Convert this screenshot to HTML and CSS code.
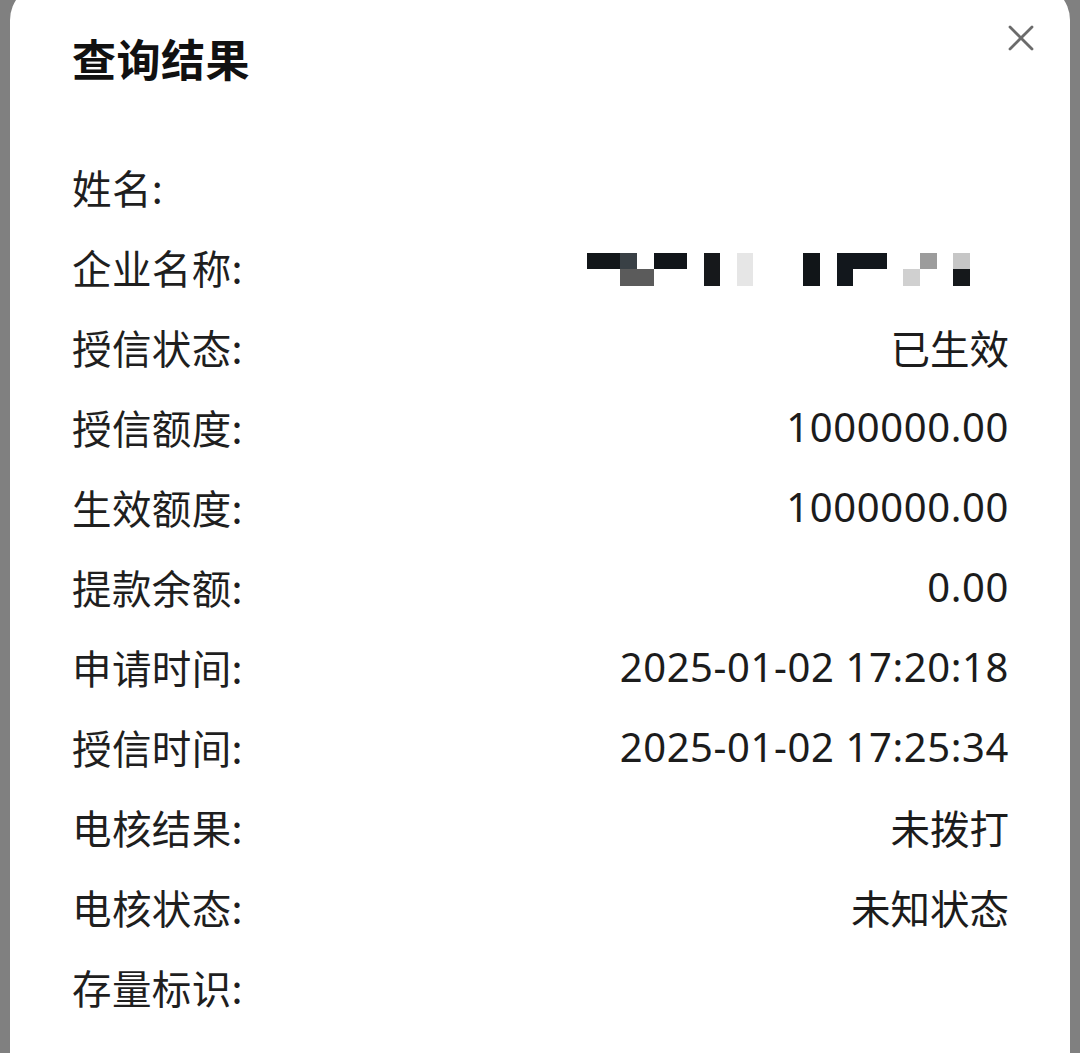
FILE: index.html
```html
<!DOCTYPE html>
<html lang="zh-CN">
<head>
<meta charset="utf-8">
<title>查询结果</title>
<link rel="stylesheet" href="styles.css">
</head>
<body>
<div class="sheet">
  <div class="header">
    <h1 class="title">查询结果</h1>
    <button class="close" aria-label="关闭">
      <svg viewBox="0 0 26 26" width="26" height="26"><path d="M2 2L24 24M24 2L2 24" stroke="#6b6b6b" stroke-width="2.8" stroke-linecap="round"/></svg>
    </button>
  </div>
  <div class="rows">
    <div class="row"><span class="label">姓名:</span><span class="value"></span></div>
    <div class="row"><span class="label">企业名称:</span>
      <span class="mosaic">
        <i class="c a"></i><i class="c b"></i><i class="c d"></i><i class="c e"></i>
        <i class="c f"></i><i class="c g"></i><i class="c h"></i><i class="c j"></i>
        <i class="c k"></i><i class="c l"></i><i class="c m"></i><i class="c n"></i><i class="c o"></i>
      </span>
    </div>
    <div class="row"><span class="label">授信状态:</span><span class="value">已生效</span></div>
    <div class="row"><span class="label">授信额度:</span><span class="value num">1000000.00</span></div>
    <div class="row"><span class="label">生效额度:</span><span class="value num">1000000.00</span></div>
    <div class="row"><span class="label">提款余额:</span><span class="value num">0.00</span></div>
    <div class="row"><span class="label">申请时间:</span><span class="value num">2025-01-02 17:20:18</span></div>
    <div class="row"><span class="label">授信时间:</span><span class="value num">2025-01-02 17:25:34</span></div>
    <div class="row"><span class="label">电核结果:</span><span class="value">未拨打</span></div>
    <div class="row"><span class="label">电核状态:</span><span class="value">未知状态</span></div>
    <div class="row"><span class="label">存量标识:</span><span class="value"></span></div>
  </div>
</div>
</body>
</html>
```

FILE: styles.css
```css
html, body {
  margin: 0;
  padding: 0;
  background: #808080;
  height: 1053px;
  overflow: hidden;
}

.sheet {
  margin: -16px 10px 0 10px;
  height: 1069px;
  background: #ffffff;
  border-radius: 36px 36px 0 0;
  padding: 44px 61px 0 62px;
  box-sizing: border-box;
  font-family: "Noto Sans CJK SC", "Noto Sans", sans-serif;
  color: #1c1c1c;
}

.header {
  display: flex;
  justify-content: space-between;
  align-items: flex-start;
  height: 60px;
}

.title {
  margin: 0;
  font-size: 44px;
  line-height: 60px;
  font-weight: 700;
  color: #111111;
  letter-spacing: 0.5px;
}

.close {
  border: 0;
  background: none;
  padding: 0;
  margin: 0 -25px 0 0;
  width: 26px;
  height: 26px;
  display: flex;
  transform: translateY(-3px);
}

.rows {
  margin-top: 58px;
  display: flex;
  flex-direction: column;
}

.row {
  height: 80px;
  display: flex;
  justify-content: space-between;
  align-items: center;
  font-size: 39.5px;
}

.label {
  color: #1f1f1f;
  letter-spacing: 0.4px;
}

.value {
  color: #1c1c1c;
}

.num {
  font-family: "Noto Sans", "Noto Sans CJK SC", sans-serif;
  font-size: 40px;
  letter-spacing: 0.6px;
}

.mosaic {
  display: grid;
  grid-template-columns: repeat(23, 16.67px);
  grid-template-rows: 16.5px 16.5px;
  margin-right: 39px;
  transform: translateY(3px);
}

.c { display: block; }
.a { grid-column: 1 / 3; grid-row: 1; background: #121619; }
.b { grid-column: 3; grid-row: 1; background: #394045; }
.d { grid-column: 3 / 5; grid-row: 2; background: #5b5b5b; }
.e { grid-column: 5 / 7; grid-row: 1; background: #111519; }
.f { grid-column: 8; grid-row: 1 / 3; background: #16181b; }
.g { grid-column: 10; grid-row: 1 / 3; background: #e6e6e6; }
.h { grid-column: 14; grid-row: 1 / 3; background: #111518; }
.j { grid-column: 16 / 19; grid-row: 1; background: #12171c; }
.k { grid-column: 16; grid-row: 2; background: #12171c; }
.l { grid-column: 21; grid-row: 1; background: #9c9c9c; }
.m { grid-column: 20; grid-row: 2; background: #d0d0d0; }
.n { grid-column: 23; grid-row: 1; background: #c6c6c6; }
.o { grid-column: 23; grid-row: 2; background: #15181b; }
```
